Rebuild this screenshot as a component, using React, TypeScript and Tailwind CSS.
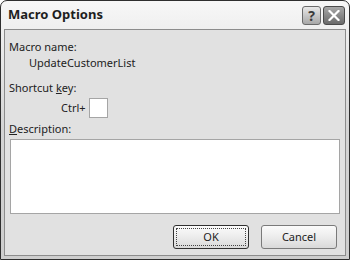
import React from "react";

function TitleButtons() {
  return (
    <div className="flex items-center gap-[2px] mt-[1px]">
      <div className="w-[19px] h-[19px] rounded-[3px] border border-[#6a6a6a] bg-gradient-to-b from-[#e8e8e8] to-[#a8a8a8] flex items-center justify-center">
        <span className="text-[14px] font-bold leading-none text-[#3a3a3a]">?</span>
      </div>
      <div className="w-[22px] h-[19px] rounded-[3px] border border-[#4a4a4a] bg-gradient-to-b from-[#a8a8a8] to-[#6a6a6a] flex items-center justify-center">
        <svg width="12" height="11" viewBox="0 0 12 11">
          <path d="M1.5 1 L10.5 10 M10.5 1 L1.5 10" stroke="#ffffff" strokeWidth="2.2" strokeLinecap="square" />
        </svg>
      </div>
    </div>
  );
}

function Button({ label, isDefault }: { label: string; isDefault?: boolean }) {
  return (
    <div
      className={
        "w-[76px] h-[24px] rounded-[3px] bg-gradient-to-b from-[#fbfbfb] via-[#ececec] to-[#d9d9d9] flex items-center justify-center " +
        (isDefault ? "border border-[#2f2f2f] p-[2px]" : "border border-[#7a7a7a]")
      }
    >
      {isDefault ? (
        <div className="w-full h-full border border-dotted border-[#444] flex items-center justify-center">
          <span>{label}</span>
        </div>
      ) : (
        <span>{label}</span>
      )}
    </div>
  );
}

export default function App() {
  return (
    <div
      className="w-[350px] h-[260px] bg-white"
      style={{ fontFamily: '"Noto Sans", "Open Sans", sans-serif' }}
    >
      <div className="w-[350px] h-[260px] flex flex-col border border-[#2e2e2e] rounded-t-[7px] bg-gradient-to-b from-[#f7f7f7] via-[#d4d4d4] to-[#cdcdcd] overflow-hidden">
        <div className="h-[28px] flex items-center justify-between pl-[7px] pr-[4px]">
          <span className="text-[13px] font-bold text-[#1e1e1e]">Macro Options</span>
          <TitleButtons />
        </div>
        <div className="flex-1 mx-[3px] mb-[3px] border border-[#8c8c8c] bg-[#e1e1e1] text-[11px] leading-[16px] text-[#222] flex flex-col px-[4px] pt-[9px]">
          <div>Macro name:</div>
          <div className="pl-[20px]">UpdateCustomerList</div>
          <div className="mt-[9px]">
            Shortcut <span className="underline">k</span>ey:
          </div>
          <div className="mt-[2px] flex items-center h-[20px] pl-[52px] gap-[3px]">
            <span>Ctrl+</span>
            <div className="w-[19px] h-[20px] bg-white border border-[#a5a5a5]" />
          </div>
          <div className="mt-[3px]">
            <span className="underline">D</span>escription:
          </div>
          <div className="mt-[2px] ml-[1px] mr-[1px] h-[75px] bg-white border border-[#a5a5a5]" />
          <div className="mt-[11px] flex justify-end gap-[12px] pr-[4px]">
            <Button label="OK" isDefault />
            <Button label="Cancel" />
          </div>
        </div>
      </div>
    </div>
  );
}
